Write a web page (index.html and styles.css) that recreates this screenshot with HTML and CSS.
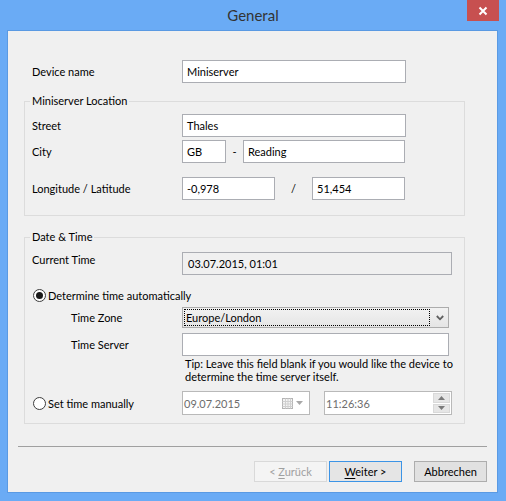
FILE: index.html
```html
<!DOCTYPE html>
<html>
<head>
<meta charset="utf-8">
<link rel="stylesheet" href="styles.css">
</head>
<body>
<div class="window">
  <div class="titlebar">
    <span class="title">General</span>
    <div class="close">
      <svg width="10" height="10" viewBox="0 0 10 10"><path d="M1.5 1.5 L8.5 8.5 M8.5 1.5 L1.5 8.5" stroke="#fff" stroke-width="2" fill="none"/></svg>
    </div>
  </div>
  <div class="client">
    <div class="main">
      <div class="row device-row">
        <span class="label">Device name</span>
        <div class="input w224">Miniserver</div>
      </div>

      <fieldset class="group g1">
        <legend>Miniserver Location</legend>
        <div class="row r-street">
          <span class="label">Street</span>
          <div class="input w224">Thales</div>
        </div>
        <div class="row r-city">
          <span class="label">City</span>
          <div class="fields">
            <div class="input w44">GB</div>
            <span class="dash">-</span>
            <div class="input w162">Reading</div>
          </div>
        </div>
        <div class="row r-lon">
          <span class="label">Longitude / Latitude</span>
          <div class="fields">
            <div class="input w93">-0,978</div>
            <span class="slash">/</span>
            <div class="input w93">51,454</div>
          </div>
        </div>
      </fieldset>

      <fieldset class="group g2">
        <legend>Date &amp; Time</legend>
        <div class="row r-current">
          <span class="label label-top">Current Time</span>
          <div class="input readonly w270">03.07.2015, 01:01</div>
        </div>
        <div class="radio-row r-auto">
          <span class="radio checked"><span class="dot"></span></span>
          <span>Determine time automatically</span>
        </div>
        <div class="row r-zone">
          <span class="label sub">Time Zone</span>
          <div class="combo">
            <div class="focus">Europe/London</div>
            <div class="arrow">
              <svg width="8" height="6" viewBox="0 0 8 6"><path d="M0.8 1 L4 4.3 L7.2 1" stroke="#5f5f5f" stroke-width="1.8" fill="none"/></svg>
            </div>
          </div>
        </div>
        <div class="row r-server">
          <span class="label sub">Time Server</span>
          <div class="input w267"></div>
        </div>
        <div class="tip"><div>Tip: Leave this field blank if you would like the device to</div><div>determine the time server itself.</div></div>
        <div class="row r-manual">
          <div class="radio-row">
            <span class="radio"></span>
            <span>Set time manually</span>
          </div>
          <div class="fields gap14">
            <div class="picker date">
              <span class="ptext">09.07.2015</span>
              <span class="cal">
                <svg width="11" height="11" viewBox="0 0 11 11">
                  <rect x="0.5" y="0.5" width="10" height="10" fill="#f4f4f4" stroke="#b4b4b4"/>
                  <path d="M0.5 3.5 H10.5 M0.5 6 H10.5 M0.5 8.5 H10.5 M3.5 0.5 V10.5 M6 0.5 V10.5 M8.5 0.5 V10.5" stroke="#d0d0d0" stroke-width="1"/>
                </svg>
              </span>
              <svg class="tri" width="7" height="4" viewBox="0 0 7 4"><path d="M0 0 H7 L3.5 4 Z" fill="#a8a8a8"/></svg>
            </div>
            <div class="picker time">
              <span class="ptext">11:26:36</span>
              <span class="spin">
                <span class="sbtn"><svg width="7" height="4" viewBox="0 0 7 4"><path d="M0 4 H7 L3.5 0 Z" fill="#7a7a7a"/></svg></span>
                <span class="sbtn"><svg width="7" height="4" viewBox="0 0 7 4"><path d="M0 0 H7 L3.5 4 Z" fill="#7a7a7a"/></svg></span>
              </span>
            </div>
          </div>
        </div>
      </fieldset>
    </div>

    <div class="separator"></div>

    <div class="buttons">
      <div class="btn disabled"><span>&lt; <u>Z</u>urück</span></div>
      <div class="btn default"><span><u>W</u>eiter &gt;</span></div>
      <div class="btn cancel"><span>Abbrechen</span></div>
    </div>
  </div>
</div>
</body>
</html>
```
FILE: styles.css
```css
* { box-sizing: border-box; }
html, body { margin: 0; padding: 0; }
body {
  width: 506px;
  height: 501px;
  overflow: hidden;
  background: #6aabf5;
  font-family: Lato, "Open Sans", sans-serif;
  font-size: 11px;
  color: #000;
}
.window {
  width: 506px;
  height: 501px;
  display: flex;
  flex-direction: column;
}
.titlebar {
  height: 30px;
  position: relative;
  display: flex;
  justify-content: center;
  align-items: center;
}
.title {
  font-size: 15px;
  color: #333;
  margin-top: -1px;
}
.close {
  position: absolute;
  top: 0;
  right: 7px;
  width: 32px;
  height: 21px;
  background: #c75050;
  display: flex;
  align-items: center;
  justify-content: center;
}
.client {
  margin: 0 8px 0 7px;
  height: 463px;
  background: #f0f0f0;
  border: 1px solid #5a9ae3;
}
.main {
  padding: 29px 0 0 16px;
}
.row {
  display: grid;
  grid-template-columns: 150px auto;
  align-items: center;
}
.label { line-height: 16px; }
.label-top { align-self: start; }
.sub { padding-left: 39px; }
.device-row { padding-left: 8px; }
.input {
  height: 23px;
  border: 1px solid #abadb3;
  background: #fff;
  padding: 0 4px;
  display: flex;
  align-items: center;
  white-space: nowrap;
}
.input.readonly { background: #f0f0f0; padding-left: 5px; }
.w224 { width: 224px; }
.w44 { width: 44px; }
.w162 { width: 162px; }
.w93 { width: 93px; }
.w270 { width: 270px; }
.w267 { width: 267px; }
.fields { display: flex; align-items: center; }
.gap14 { gap: 14px; }
.dash { width: 17px; text-align: center; }
.slash { width: 37px; text-align: center; }

.group {
  margin: 0;
  border: 1px solid #dcdcdc;
  width: 441px;
  min-width: 0;
}
.group legend {
  padding: 0 2px;
  margin-left: -2px;
  line-height: 16px;
}
.g1 { margin-top: 10px; padding: 5px 0 15px 7px; }
.r-street { margin-bottom: 3px; }
.r-city { margin-bottom: 14px; }
.g2 { margin-top: 13px; padding: 7px 0 8px 7px; }

.radio-row {
  display: flex;
  align-items: center;
  height: 16px;
  gap: 2px;
}
.r-auto { margin-top: 12px; }
.radio {
  width: 13px;
  height: 13px;
  margin-left: 1px;
  border-radius: 50%;
  border: 1px solid #3d3d3d;
  background: #fff;
  display: flex;
  align-items: center;
  justify-content: center;
}
.radio .dot {
  width: 7px;
  height: 7px;
  border-radius: 50%;
  background: #1a1a1a;
}
.r-zone { margin-top: 4px; }
.combo {
  width: 267px;
  height: 21px;
  border: 1px solid #acacac;
  background: linear-gradient(#f2f2f2, #e5e5e5);
  display: flex;
  align-items: flex-start;
  padding: 1px 0 0 1px;
}
.focus {
  width: 246px;
  height: 17px;
  border: 1px dotted #000;
  padding-left: 1px;
  line-height: 15px;
  white-space: nowrap;
}
.arrow {
  flex: 1;
  height: 17px;
  display: flex;
  align-items: center;
  justify-content: center;
  padding-left: 1px;
}
.r-server { margin-top: 5px; }
.tip {
  margin-top: 1px;
  padding-left: 153px;
  white-space: nowrap;
}
.tip div { height: 13px; line-height: 13px; }
.r-manual { margin-top: 8px; }
.picker {
  width: 128px;
  height: 24px;
  border: 1px solid #b9b9b9;
  background: #fff;
  display: flex;
  align-items: center;
  padding-left: 1px;
  color: #6d6d6d;
}
.ptext { flex: 1; }
.cal { display: flex; margin-right: 3px; }
.tri { margin-right: 6px; }
.spin {
  display: flex;
  flex-direction: column;
  align-self: stretch;
  padding: 1px 1px 1px 0;
  gap: 1px;
}
.sbtn {
  flex: 1;
  width: 17px;
  background: #e6e6e6;
  border: 1px solid #d9d9d9;
  display: flex;
  align-items: center;
  justify-content: center;
}
.separator {
  margin: 22px 0 0 10px;
  width: 469px;
  height: 1px;
  background: #a0a0a0;
}
.buttons {
  margin-top: 14px;
  padding-right: 10px;
  display: flex;
  justify-content: flex-end;
}
.btn {
  width: 73px;
  height: 21px;
  border: 1px solid #adadad;
  background: #e1e1e1;
  display: flex;
  align-items: center;
  justify-content: center;
}
.btn.disabled {
  border-color: #d9d9d9;
  background: #f4f4f4;
  color: #a0a0a0;
}
.btn.default {
  margin-left: 2px;
  border-color: #3c94e6;
  background: #e5e5e5;
}
.btn.cancel { margin-left: 12px; }
u { text-decoration-thickness: 1px; text-underline-offset: 2px; }
```
